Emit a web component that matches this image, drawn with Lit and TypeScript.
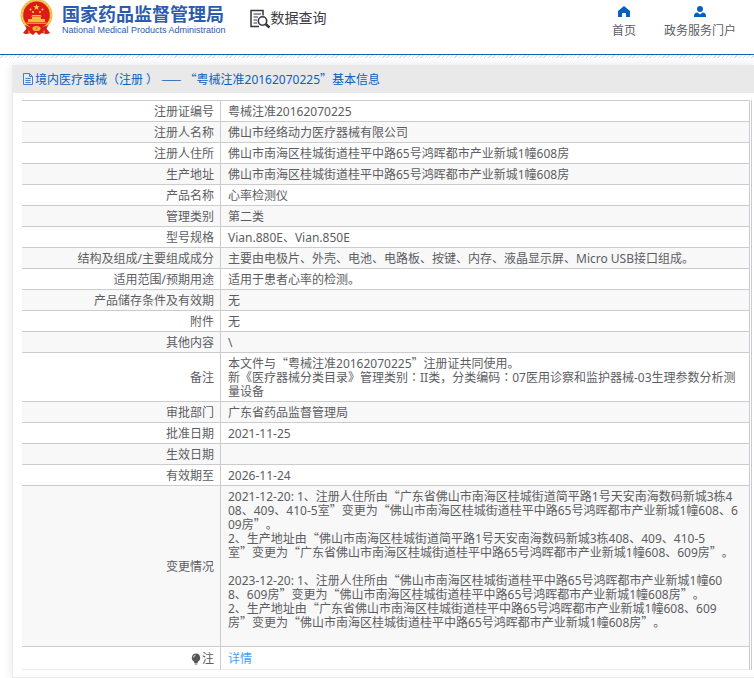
import { LitElement, html, css, svg } from "lit";
import { customElement } from "lit/decorators.js";

interface Row {
  label: string;
  lines: string[];
}

const rows: Row[] = [
  { label: "注册证编号", lines: ["粤械注准20162070225"] },
  { label: "注册人名称", lines: ["佛山市经络动力医疗器械有限公司"] },
  { label: "注册人住所", lines: ["佛山市南海区桂城街道桂平中路65号鸿晖都市产业新城1幢608房"] },
  { label: "生产地址", lines: ["佛山市南海区桂城街道桂平中路65号鸿晖都市产业新城1幢608房"] },
  { label: "产品名称", lines: ["心率检测仪"] },
  { label: "管理类别", lines: ["第二类"] },
  { label: "型号规格", lines: ["Vian.880E、Vian.850E"] },
  { label: "结构及组成/主要组成成分", lines: ["主要由电极片、外壳、电池、电路板、按键、内存、液晶显示屏、Micro USB接口组成。"] },
  { label: "适用范围/预期用途", lines: ["适用于患者心率的检测。"] },
  { label: "产品储存条件及有效期", lines: ["无"] },
  { label: "附件", lines: ["无"] },
  { label: "其他内容", lines: ["\\"] },
  {
    label: "备注",
    lines: [
      "本文件与“粤械注准20162070225”注册证共同使用。",
      "新《医疗器械分类目录》管理类别：II类，分类编码：07医用诊察和监护器械-03生理参数分析测",
      "量设备",
    ],
  },
  { label: "审批部门", lines: ["广东省药品监督管理局"] },
  { label: "批准日期", lines: ["2021-11-25"] },
  { label: "生效日期", lines: [""] },
  { label: "有效期至", lines: ["2026-11-24"] },
  {
    label: "变更情况",
    lines: [
      "2021-12-20: 1、注册人住所由“广东省佛山市南海区桂城街道简平路1号天安南海数码新城3栋4",
      "08、409、410-5室”变更为“佛山市南海区桂城街道桂平中路65号鸿晖都市产业新城1幢608、6",
      "09房”。",
      "2、生产地址由“佛山市南海区桂城街道简平路1号天安南海数码新城3栋408、409、410-5",
      "室”变更为“广东省佛山市南海区桂城街道桂平中路65号鸿晖都市产业新城1幢608、609房”。",
      "",
      "2023-12-20: 1、注册人住所由“佛山市南海区桂城街道桂平中路65号鸿晖都市产业新城1幢60",
      "8、609房”变更为“佛山市南海区桂城街道桂平中路65号鸿晖都市产业新城1幢608房”。",
      "2、生产地址由“广东省佛山市南海区桂城街道桂平中路65号鸿晖都市产业新城1幢608、609",
      "房”变更为“佛山市南海区桂城街道桂平中路65号鸿晖都市产业新城1幢608房”。",
      "",
    ],
  },
];

// Curly quotes and dashes take the full-width face; the colon sits centred.
const cjk = (text: string) =>
  text.split(/([“”—]+|：)/).map((part) =>
    /^[“”—]/.test(part)
      ? html`<span class="wide">${part}</span>`
      : part === "："
        ? html`<span class="mid">${part}</span>`
        : part
  );

const emblem = svg`
  <path d="M7 28 L3 33 Q6 35 10 33 L13 35 L16 32 L19 35 L22 33 Q27 35 30 33 L26 28 Z" fill="#d81e1c"/>
  <path d="M9 29 V34 M24 29 V34" stroke="#f2bd3a" stroke-width="1"/>
  <ellipse cx="16.500" cy="15" rx="16" ry="16" fill="#e8b93c"/>
  <ellipse cx="16.500" cy="15" rx="14.500" ry="15" fill="none" stroke="#f3d164" stroke-width="1.500" stroke-dasharray="2 1.500"/>
  <ellipse cx="16.500" cy="15" rx="13.300" ry="13.500" fill="#dc1a18"/>
  <path d="M16.500 4 L17.300 6.300 H19.700 L17.800 7.700 L18.500 10 L16.500 8.600 L14.500 10 L15.200 7.700 L13.300 6.300 H15.700 Z" fill="#fbd44a"/>
  <g fill="#fbd44a"><circle cx="10.500" cy="9.500" r="1"/><circle cx="13" cy="12" r="1"/><circle cx="20" cy="12" r="1"/><circle cx="22.500" cy="9.500" r="1"/></g>
  <path d="M11 16.500 L12.500 15 H20.500 L22 16.500 Z M12 17 H21 V19 H12 Z M8 19 H25 V22 H8 Z" fill="#f5bc3c"/>
  <path d="M6 22.500 H27 L26 24 H7 Z" fill="#e8912c"/>
  <path d="M5 25 Q16 31 28 25 L26 30 Q16 34 7 30 Z" fill="#d81e1c"/>
  <ellipse cx="16.500" cy="28.500" rx="4" ry="2.600" fill="#f0b437"/><circle cx="16.500" cy="28.500" r="1" fill="#d8761f"/>
`;

@customElement("app-root")
export class AppRoot extends LitElement {
  static styles = css`
    :host {
      display: block;
      min-height: 100vh;
      background: #fff;
      color: #5c5d62;
      font-family: "Noto Sans", "Noto Sans CJK SC", sans-serif;
      font-size: 12px;
      line-height: 14px;
      text-spacing-trim: space-all;
      overflow-x: hidden;
    }
    a {
      text-decoration: none;
      color: inherit;
    }
    svg {
      display: block;
      flex: none;
    }
    .wide {
      font-family: "Noto Sans CJK SC", sans-serif;
      line-height: 0;
    }
    .mid {
      font-family: "Noto Sans CJK TC", sans-serif;
      line-height: 0;
    }
    .top {
      display: flex;
      align-items: flex-start;
      height: 54px;
      padding: 0 18px 0 20px;
      border-bottom: 1px solid #0a62bd;
    }
    .brand {
      display: flex;
      gap: 9px;
      color: #2b5cad;
    }
    .names {
      display: flex;
      flex-direction: column;
      padding-top: 2px;
    }
    .name {
      font: bold 18px/22px "Noto Sans CJK SC", sans-serif;
      white-space: nowrap;
    }
    .english {
      font: 9px/12px "Liberation Sans", sans-serif;
      white-space: nowrap;
    }
    .query {
      display: flex;
      align-items: flex-start;
      margin: 7px 0 0 24px;
      color: #3c3d44;
      font: 14px/20px "Noto Sans CJK SC", sans-serif;
      white-space: nowrap;
    }
    .query svg {
      margin-top: 2px;
    }
    .nav {
      display: flex;
      gap: 28px;
      margin-left: auto;
      padding-top: 6px;
      white-space: nowrap;
    }
    .nav a {
      display: flex;
      flex-direction: column;
      align-items: center;
      gap: 7px;
    }
    .hatch {
      height: 3px;
      background: repeating-linear-gradient(135deg, #fff 0 2px, #e2dfdf 2px 3px);
    }
    .panel {
      margin: 7px 0 0 12px;
      border: 1px solid #ebebeb;
      border-width: 0 0 1px 1px;
      box-shadow: 0 0 10px rgba(0, 0, 0, 0.1);
    }
    .title {
      display: flex;
      align-items: center;
      height: 28px;
      margin: 0;
      padding-left: 10px;
      background: #e9e9e9;
      color: #0a5fc0;
      font-size: 12px;
      font-weight: normal;
      white-space: nowrap;
    }
    .title svg {
      margin-right: 2px;
    }
    .title span {
      padding-top: 1px;
    }
    .box {
      margin: 7px 2px 7px 9px;
      padding-right: 1px;
      border-right: 1px solid #cacad0;
    }
    table {
      width: 100%;
      border-collapse: separate;
      border-spacing: 0;
      border-right: 1px solid #ccccd0;
    }
    th,
    td {
      padding: 4px 6px 2px;
      border-top: 1px solid #ccc;
      font-weight: normal;
      vertical-align: middle;
    }
    th {
      width: 186px;
      border-right: 1px solid #ccc;
      text-align: right;
    }
    td {
      padding-left: 7px;
      text-align: left;
    }
    tr:nth-child(even) {
      background: #f8f8f8;
    }
    .line {
      min-height: 14px;
      white-space: nowrap;
    }
    .last th,
    .last td {
      padding-top: 5px;
      padding-bottom: 3px;
      border-bottom: 1px solid #ebebeb;
    }
    .note {
      display: flex;
      justify-content: flex-end;
      align-items: center;
      gap: 1px;
    }
    .detail {
      color: #409eff;
    }
  `;

  render() {
    return html`
      <header class="top">
        <a class="brand" href="#">
          <svg width="33" height="36" viewBox="0 0 33 36" aria-hidden="true">${emblem}</svg>
          <span class="names">
            <span class="name">国家药品监督管理局</span>
            <span class="english">National Medical Products Administration</span>
          </span>
        </a>
        <a class="query" href="#">
          <svg width="21" height="20" viewBox="0 0 21 20" fill="none" stroke="#33343f" aria-hidden="true">
            <path d="M9 17.500 H1 V1.500 H13 V6.500" stroke-width="1.500"/>
            <path d="M3.500 5 H11 M3.500 8 H8 M3.500 11 H7 M3.500 14 H7" stroke-width="1.200"/>
            <circle cx="12.500" cy="12" r="4.200" stroke-width="1.600"/>
            <path d="M15.500 15 L19.500 18.500" stroke-width="2.400"/>
          </svg>
          数据查询
        </a>
        <nav class="nav">
          <a href="#">
            <svg width="12" height="11" viewBox="0 0 12 11" fill="#0560c2" aria-hidden="true">
              <path d="M6 0 L12 5 V11 H8 V7 H4 V11 H0 V5 Z"/>
            </svg>
            首页
          </a>
          <a href="#">
            <svg width="12" height="11" viewBox="0 0 12 11" fill="#0560c2" aria-hidden="true">
              <circle cx="6" cy="3" r="3"/>
              <path d="M0 11.500 V10 Q0 7 3.500 6.600 L6 8.500 L8.500 6.600 Q12 7 12 10 V11.500 Z"/>
            </svg>
            政务服务门户
          </a>
        </nav>
      </header>
      <div class="hatch"></div>
      <main class="panel">
        <h1 class="title">
          <svg width="10" height="12" viewBox="0 0 10 12" fill="none" stroke="#3f7fce" aria-hidden="true">
            <path d="M0.500 0.500 H6.500 L9.500 3.500 V11.500 H0.500 Z M6.500 0.500 V3.500 H9.500"/>
            <path d="M2.500 5.500 H7.500 M2.500 7.500 H7.500 M2.500 9.500 H7.500"/>
          </svg>
          <span>${cjk("境内医疗器械（注册 ） —— “粤械注准20162070225”基本信息")}</span>
        </h1>
        <div class="box">
          <table>
            <tbody>
              ${rows.map(
                (row) => html`<tr>
                  <th scope="row">${row.label}</th>
                  <td>${row.lines.map((line) => html`<div class="line">${cjk(line)}</div>`)}</td>
                </tr>`
              )}
              <tr class="last">
                <th scope="row">
                  <span class="note">
                    <svg width="10" height="12" viewBox="0 0 10 12" fill="#55565a" aria-hidden="true">
                      <path d="M5 0.500 A4.300 4.300 0 0 1 7.200 8.400 L6.500 10 H3.500 L2.800 8.400 A4.300 4.300 0 0 1 5 0.500 Z M3.700 10.500 H6.300 V11.500 H3.700 Z"/>
                      <path d="M2.500 4.500 Q2.600 2.600 4.500 2.200" fill="none" stroke="#fff" stroke-width="0.800"/>
                    </svg>
                    注
                  </span>
                </th>
                <td><a class="detail" href="#">详情</a></td>
              </tr>
            </tbody>
          </table>
        </div>
      </main>
    `;
  }
}
